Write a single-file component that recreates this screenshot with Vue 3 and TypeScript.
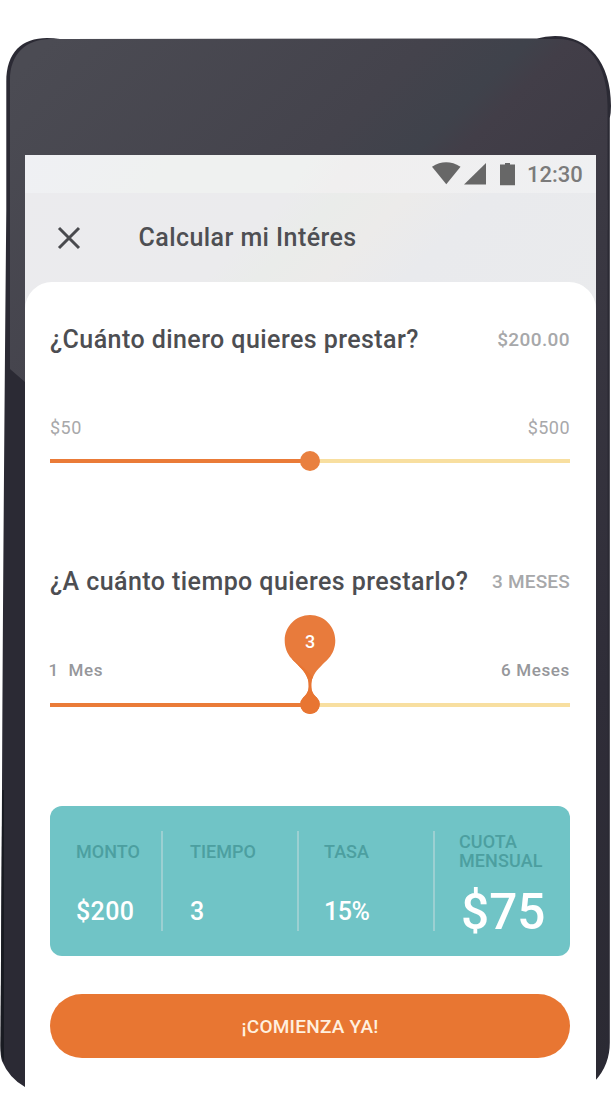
<script setup lang="ts">
interface Fact {
  label: string
  value: string
  kind: string
}

const facts: Fact[] = [
  { label: 'MONTO', value: '$200', kind: 'amount' },
  { label: 'TIEMPO', value: '3', kind: 'time' },
  { label: 'TASA', value: '15%', kind: 'rate' },
  { label: 'CUOTA MENSUAL', value: '$75', kind: 'quota' },
]
</script>

<template>
  <div class="stage">
    <svg class="device" width="612" height="1108" viewBox="0 0 612 1108" aria-hidden="true">
      <defs>
        <linearGradient id="face" gradientUnits="userSpaceOnUse" x1="60" y1="30" x2="480" y2="450">
          <stop offset="0" stop-color="#4b4b53" />
          <stop offset="0.45" stop-color="#44434c" />
          <stop offset="0.57" stop-color="#3f424b" />
          <stop offset="0.62" stop-color="#423e48" />
          <stop offset="0.9" stop-color="#3b3943" />
        </linearGradient>
        <linearGradient id="side" x1="0" y1="0" x2="0" y2="1">
          <stop offset="0" stop-color="#3b3943" />
          <stop offset="0.55" stop-color="#2f2d38" />
          <stop offset="1" stop-color="#2b2a33" />
        </linearGradient>
      </defs>
      <path fill="#2b2a34" d="M6.3 82C6.3 52 22 38 47 38Q54 38 60 39L537 38.6Q545 36 555 36C588 36 611 62 611 106Q611 113 609.8 118V1042Q610 1065 595 1081H25V1087Q9 1078 2 1061Q0 1055 0.5 1040L2 790Q3 560 6.3 210Z" />
      <path fill="url(#face)" d="M10 80C10 54 26 39 51 39H558C588 39 607.5 64 607.5 106V230H595V160H25V382L10 369Z" />
      <path fill="url(#side)" d="M595 200H607.5V1050L595 1078Z" />
      <path fill="#191b22" d="M2.2 790H4L4 1062Q0.8 1056 0.6 1046Z" />
    </svg>

    <main class="screen">
      <div class="status">
        <svg width="56" height="24" viewBox="0 0 56 24" aria-hidden="true">
          <path d="M0 4.7Q14 -4 28.5 4.7L14.3 22.3Z" />
          <path d="M32 22.5L54 1V22.5Z" />
        </svg>
        <svg class="battery" width="15" height="23" viewBox="0 0 15 23" aria-hidden="true">
          <path d="M0 1.5H5V0H10V1.5H15V22.2H0Z" />
        </svg>
        <span class="clock">12:30</span>
      </div>

      <header class="toolbar">
        <svg width="24" height="24" viewBox="0 0 24 24" aria-hidden="true">
          <path d="M2 2L22 22M22 2L2 22" />
        </svg>
        <h1>Calcular mi Intéres</h1>
      </header>

      <div class="sheet">
        <section class="question money">
          <div class="heading">
            <h2>¿Cuánto dinero quieres prestar?</h2>
            <span class="answer">$200.00</span>
          </div>
          <div class="limits">
            <span>$50</span>
            <span>$500</span>
          </div>
          <div class="track"><i class="fill"></i><i class="knob"></i></div>
        </section>

        <section class="question term">
          <div class="heading">
            <h2>¿A cuánto tiempo quieres prestarlo?</h2>
            <span class="answer">3 MESES</span>
          </div>
          <div class="limits">
            <span class="from">1&nbsp; Mes</span>
            <span>6 Meses</span>
          </div>
          <div class="track">
            <i class="fill"></i>
            <div class="pin">
              <svg width="52" height="100" viewBox="0 0 52 100" aria-hidden="true">
                <path fill="#e87b3c" d="M26 0C12 0 0.7 11.3 0.7 25.4C0.7 32 3 38.5 7.5 43.5C12 48.5 19 54 22 60C24.5 65 24.7 67 24.7 71C24.7 76 23 79 19.2 82.5A9.7 9.7 0 1 0 32.8 82.5C29 79 27.3 76 27.3 71C27.3 67 27.5 65 30 60C33 54 40 48.5 44.5 43.5C49 38.5 51.3 32 51.3 25.4C51.3 11.3 40 0 26 0Z" />
                <path fill="#e87532" d="M7.5 43.5C12 48.5 19 54 22 60C24.5 65 24.7 67 24.7 71C24.7 76 23 79 19.2 82.5A9.7 9.7 0 1 0 32.8 82.5C29 79 27.3 76 27.3 71C27.3 67 27.5 65 29 62Q20 52 7.5 43.5Z" />
              </svg>
              <span>3</span>
            </div>
          </div>
        </section>

        <section class="summary">
          <div v-for="fact in facts" :key="fact.kind" class="fact" :class="fact.kind">
            <span class="label">{{ fact.label }}</span>
            <strong>{{ fact.value }}</strong>
          </div>
        </section>

        <button class="start" type="button">¡COMIENZA YA!</button>
      </div>
    </main>
  </div>
</template>

<style>
body {
  background: #fff;
}
</style>

<style scoped>
.stage {
  position: relative;
  box-sizing: border-box;
  width: 612px;
  height: 1108px;
  padding: 155px 16.5px 0 25px;
  overflow: hidden;
  font-family: Roboto, "Liberation Sans", sans-serif;
  font-weight: 500;
}
.device {
  position: absolute;
  inset: 0;
}
.screen {
  position: relative;
  height: 953px;
  background: linear-gradient(135deg, #ebebee 0%, #ebebed 41%, #eaecea 48%, #ecebea 57%, #e9eaed 68%, #eaebed 100%) 0 0 / 100% 170px no-repeat, #fff;
}
.status {
  display: flex;
  align-items: center;
  box-sizing: border-box;
  height: 38px;
  padding-left: 407px;
  background: linear-gradient(125deg, #eff0f4 0%, #eff1f0 25%, #eff1f0 48%, #f0efef 55%, #eff0f2 100%);
}
.status svg {
  flex: none;
  fill: #676767;
}
.status .battery {
  margin-left: 12px;
}
.clock {
  margin-left: 12px;
  padding-top: 2px;
  color: #7b7b7b;
  font-size: 22px;
  line-height: 38px;
  white-space: nowrap;
}
.toolbar {
  display: flex;
  align-items: center;
  height: 89px;
  padding-left: 32px;
}
.toolbar svg {
  fill: none;
  stroke: #494a4e;
  stroke-width: 3;
}
h1 {
  margin: 0 0 0 57.5px;
  color: #4e4f53;
  font-size: 25px;
  font-weight: 500;
  letter-spacing: 0.43px;
  white-space: nowrap;
}
.sheet {
  display: flex;
  flex-direction: column;
  box-sizing: border-box;
  height: 826px;
  padding: 40px 25.5px 0 25px;
  border-radius: 27px 27px 0 0;
  background: #fff;
}
.question {
  height: 242px;
}
.heading,
.limits {
  display: flex;
  align-items: center;
  justify-content: space-between;
  white-space: nowrap;
}
.heading {
  height: 34px;
}
h2 {
  margin: 0;
  color: #4d4e52;
  font-size: 25px;
  font-weight: 500;
  letter-spacing: 0.43px;
}
.answer {
  color: #a7a8aa;
  font-size: 19px;
  letter-spacing: 0.4px;
}
.term .answer {
  letter-spacing: 0.2px;
}
.limits {
  height: 24px;
  margin-top: 59px;
  color: #a8a8aa;
  font-size: 18px;
  font-weight: 400;
  letter-spacing: 0.45px;
}
.track {
  position: relative;
  height: 4px;
  margin-top: 20px;
  background: #f8dfa0;
}
.fill {
  display: block;
  width: 50%;
  height: 4px;
  background: #ea7b38;
}
.knob {
  position: absolute;
  top: -8px;
  left: 250px;
  width: 20px;
  height: 20px;
  border-radius: 50%;
  background: #e9803f;
}
.term .limits {
  height: 26px;
  color: #96979b;
  font-size: 17px;
  font-weight: 500;
  letter-spacing: 0.65px;
}
.term .from {
  margin-left: -1.5px;
}
.pin {
  position: absolute;
  top: -88px;
  left: 234px;
  width: 52px;
  height: 100px;
}
.pin span {
  position: absolute;
  top: 14px;
  left: 0;
  width: 52px;
  color: #fff;
  font-size: 18px;
  line-height: 26px;
  text-align: center;
}
.summary {
  display: grid;
  grid-template-columns: 111px 136px 136px 1fr;
  box-sizing: border-box;
  height: 150px;
  padding: 25px 0 25px;
  border-radius: 12px;
  background: #70c4c6;
}
.fact {
  display: flex;
  flex-direction: column;
  box-sizing: border-box;
  height: 100px;
  padding: 11px 0 0 27px;
}
.fact.amount {
  padding-left: 26px;
}
.fact.rate {
  padding-left: 25px;
}
.fact + .fact {
  border-left: 2px solid #9cd0d2;
}
.label {
  color: #4c9fa0;
  font-size: 18px;
  line-height: 19px;
}
.fact strong {
  margin-top: 36px;
  color: #fff;
  font-size: 25px;
  font-weight: 500;
  letter-spacing: 0.4px;
  line-height: 30px;
}
.fact.rate strong {
  letter-spacing: -0.4px;
}
.fact.quota {
  padding: 1px 0 0 24px;
}
.fact.quota .label {
  letter-spacing: 0.1px;
}
.fact.quota strong {
  margin: 12px 0 0 2px;
  font-size: 49.5px;
  letter-spacing: 0;
  line-height: 60px;
}
.start {
  flex: none;
  height: 64px;
  margin: 38px 0 0;
  padding: 0;
  border: 0;
  border-radius: 32px;
  background: #e87632;
  color: #fff0df;
  font: 500 19px Roboto, "Liberation Sans", sans-serif;
  letter-spacing: 0.25px;
}
</style>
